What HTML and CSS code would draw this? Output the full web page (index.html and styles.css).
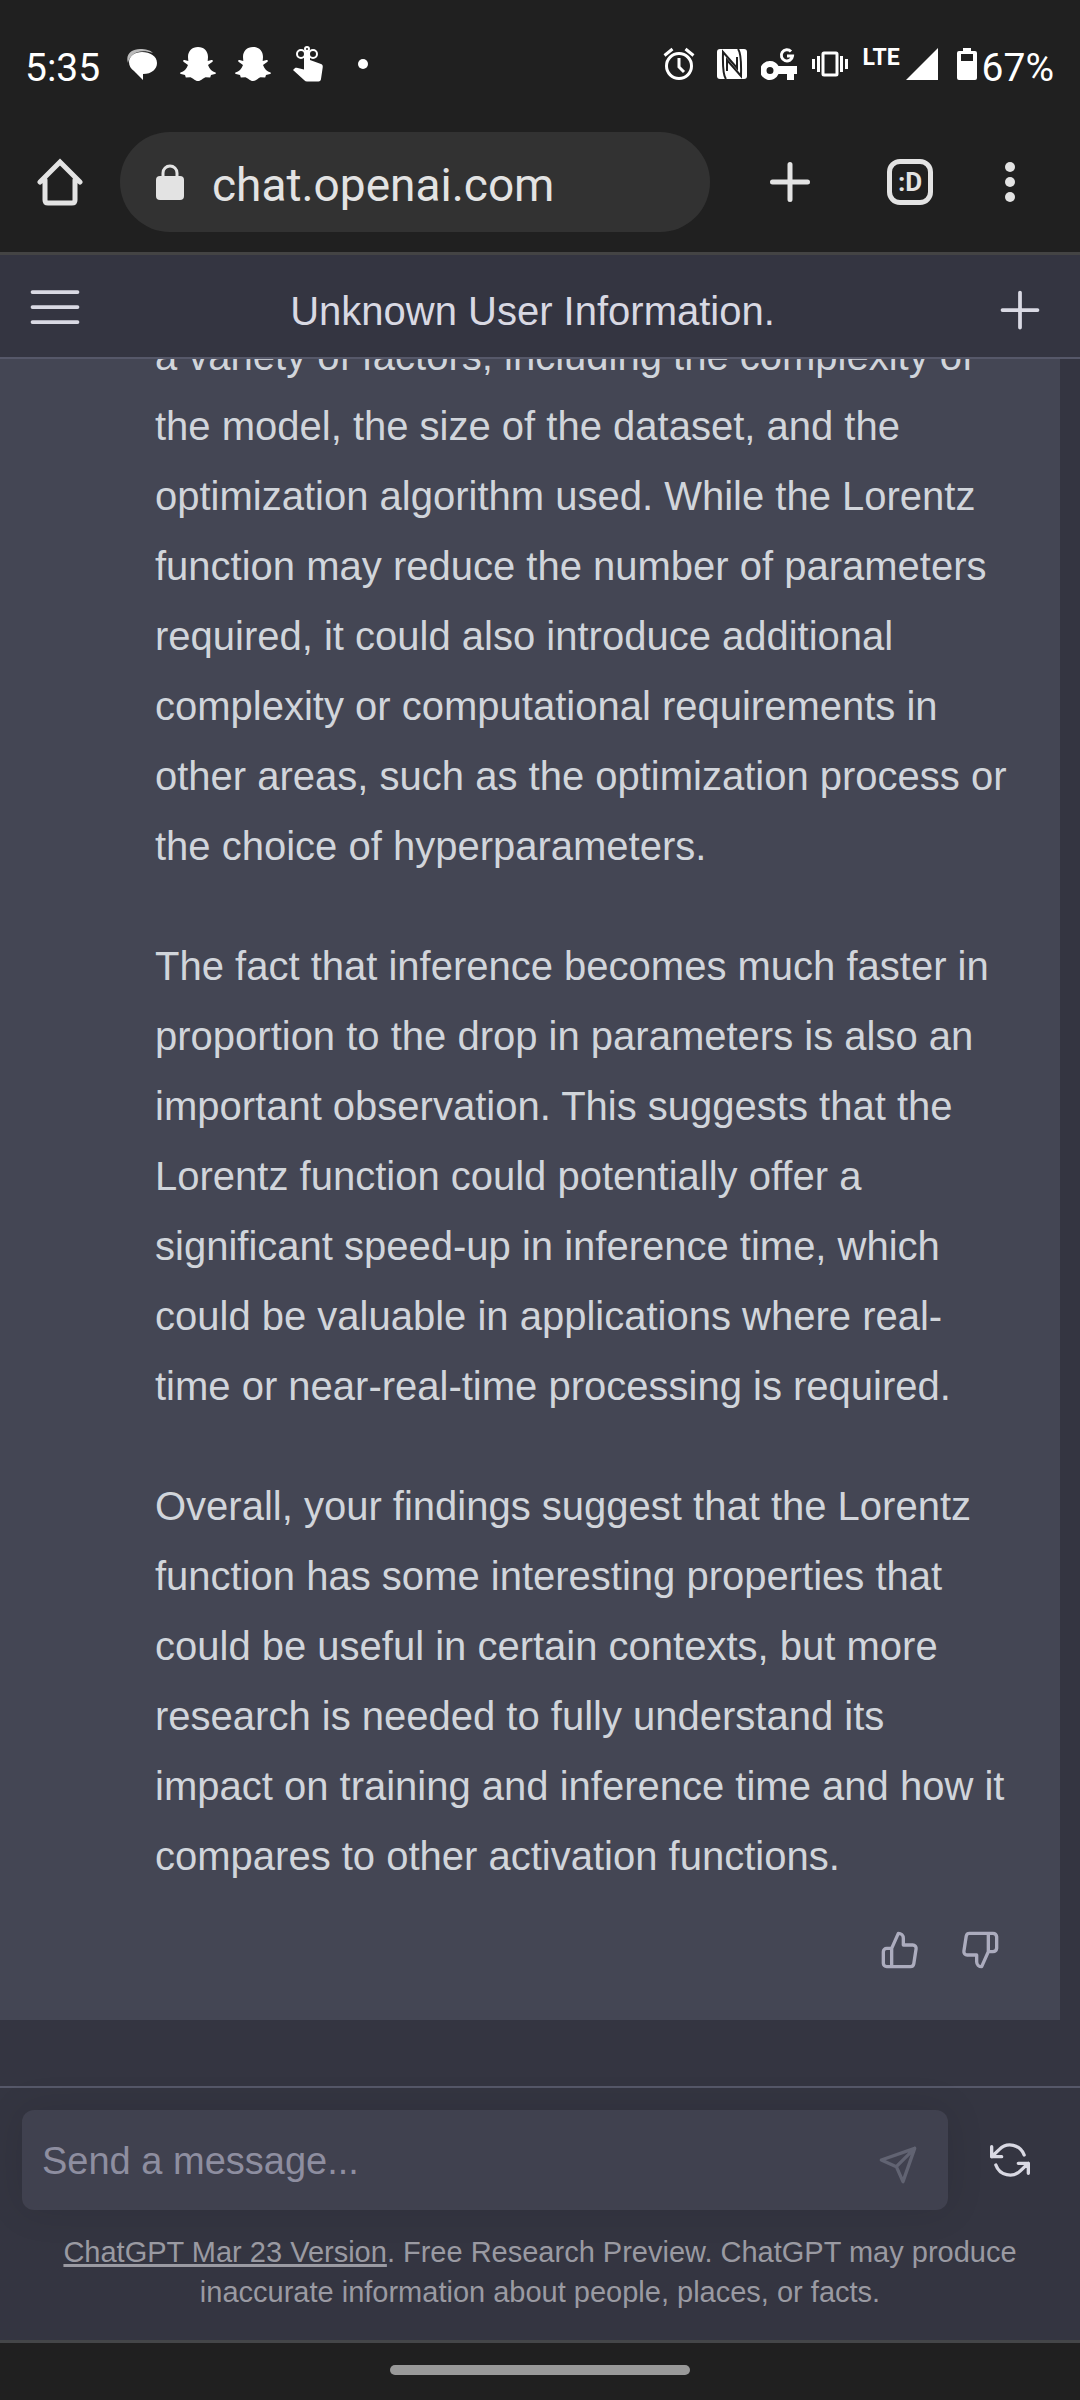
FILE: index.html
```html
<!DOCTYPE html>
<html lang="en">
<head>
<meta charset="utf-8">
<meta name="viewport" content="width=device-width, initial-scale=1">
<title>Unknown User Information.</title>
<link rel="stylesheet" href="styles.css">
</head>
<body>
<div class="status-bar">
  <div class="status-group status-left">
    <span class="status-text">5:35</span>
    <svg width="32" height="34" viewBox="0 0 32 34" aria-hidden="true"><path fill="#bbb" d="M2 16C-1 7 6 2 14 2c6 0 10 1 13 4-6-2-11-2-15-1C6 7 3 11 2 16z"/><path fill="#fff" d="M16 5c8 0 15 4 15 11 0 6-5 11-14 11v6L8 24c-3-2-5-5-5-9C3 9 9 5 16 5z"/></svg>
    <svg class="ghost" width="36" height="36" viewBox="0 0 36 36" aria-hidden="true"><path fill="#fff" d="M18 1c6 0 10 4 10 10l-.3 4 3.800-1c1.500 0 1.800 1.300.7 2L28 19c1.500 4 4 6.500 7.500 7.500.7.500.4 1.300-.5 1.600l-4 1-.8 2.400-4.700-.3C23 32 21 35 18 35s-5-3-7.500-3.800l-4.700.3L5 29.100l-4-1c-.9-.3-1.200-1.100-.5-1.600C4 25.500 6.500 23 8 19l-4.200-3c-1.100-.7-.8-2 .7-2l3.800 1L8 11C8 5 12 1 18 1z"/></svg>
    <svg class="ghost" width="36" height="36" viewBox="0 0 36 36" aria-hidden="true"><path fill="#fff" d="M18 1c6 0 10 4 10 10l-.3 4 3.800-1c1.500 0 1.800 1.300.7 2L28 19c1.500 4 4 6.500 7.500 7.500.7.500.4 1.300-.5 1.600l-4 1-.8 2.400-4.700-.3C23 32 21 35 18 35s-5-3-7.500-3.800l-4.700.3L5 29.100l-4-1c-.9-.3-1.200-1.100-.5-1.600C4 25.500 6.500 23 8 19l-4.200-3c-1.100-.7-.8-2 .7-2l3.800 1L8 11C8 5 12 1 18 1z"/></svg>
    <svg width="30" height="36" viewBox="0 0 30 36" aria-hidden="true"><g fill="none" stroke="#fff" stroke-width="2"><circle cx="8" cy="8" r="4"/><circle cx="20" cy="8" r="4"/><circle cx="14" cy="3" r="2"/></g><path fill="#fff" d="M11 6c0-2 6-2 6 0v8l11 4c1.500.6 2 1.800 1.700 3.500L28 33c-.2 1.500-1 2.500-2.500 2.500H14c-1 0-2-.4-2.700-1.200L0 24l1.800-1.800c.6-.5 1.200-.6 2-.4L11 23.500z"/></svg>
    <svg class="more-dot" width="10" height="10" viewBox="0 0 10 10" aria-hidden="true"><circle cx="5" cy="5" r="5" fill="#fff"/></svg>
  </div>
  <div class="status-group">
    <svg width="32" height="34" viewBox="0 0 32 34" aria-hidden="true"><g fill="none" stroke="#fff" stroke-width="3"><circle cx="16" cy="19" r="12.500"/><path d="M1.500 8.500l8-6.500M30.500 8.500l-8-6.500M16 11v9l5 5"/></g></svg>
    <svg class="nfc" width="30" height="30" viewBox="0 0 30 30" aria-hidden="true"><rect width="30" height="30" rx="3" fill="#fff"/><g fill="none" stroke="#202020" stroke-width="2"><path d="M9 30C5 25 6 8 6 3l14 16V8"/><path d="M21 0c4 5 3 22 3 27L10 11v11"/></g></svg>
    <svg class="key" width="36" height="34" viewBox="0 0 36 34" aria-hidden="true"><path fill="#fff" fill-rule="evenodd" d="M9 14c4 0 7 2 8.500 5H36v8h-3v6h-7v-6h-8.500A9.500 9.500 0 1 1 9 14zm0 6a3.500 3.500 0 1 0 0 7 3.500 3.500 0 0 0 0-7z"/><path fill="none" stroke="#fff" stroke-width="3" d="M30 4.500A5.600 5.600 0 1 0 31.500 9H26"/></svg>
    <svg class="vibrate" width="36" height="26" viewBox="0 0 36 26" aria-hidden="true"><rect x="11" y="2" width="14" height="22" rx="1" fill="none" stroke="#fff" stroke-width="3"/><path stroke="#fff" stroke-width="3" d="M1.500 8v10M6.500 5v16M29.500 5v16M34.500 8v10"/></svg>
    <span class="network">LTE</span>
    <svg width="32" height="32" viewBox="0 0 32 32" aria-hidden="true"><path fill="#fff" d="M32 0v32H0z"/></svg>
    <svg class="battery" width="20" height="32" viewBox="0 0 20 32" aria-hidden="true"><path fill="#fff" fill-rule="evenodd" d="M6 0h8v3h4a2 2 0 0 1 2 2v25a2 2 0 0 1-2 2H2a2 2 0 0 1-2-2V5a2 2 0 0 1 2-2h4zM4 6v7h12V6z"/></svg>
    <span class="status-text">67%</span>
  </div>
</div>

<div class="browser-bar">
  <button class="bar-button home" aria-label="Home"><svg width="46" height="48" viewBox="0 0 46 48"><path d="M3 24L23 4l20 20M8 22v20q0 3 3 3h24q3 0 3-3V22" fill="none" stroke="#e3e3e3" stroke-width="5" stroke-linecap="round"/></svg></button>
  <label class="address">
    <svg width="28" height="36" viewBox="0 0 28 36" aria-hidden="true"><rect y="12" width="28" height="24" rx="4" fill="#e3e3e3"/><path d="M7 14V9a7 7 0 0 1 14 0v5" fill="none" stroke="#e3e3e3" stroke-width="3"/></svg>
    <input type="text" value="chat.openai.com" aria-label="Address">
  </label>
  <button class="bar-button new-tab" aria-label="New tab"><svg width="40" height="40" viewBox="0 0 40 40"><path d="M20 2.500v35M2.500 20h35" stroke="#e3e3e3" stroke-width="5" stroke-linecap="round"/></svg></button>
  <button class="bar-button tabs" aria-label="Tabs">:D</button>
  <button class="bar-button" aria-label="More"><svg width="10" height="40" viewBox="0 0 10 40"><g fill="#e3e3e3"><circle cx="5" cy="5" r="5"/><circle cx="5" cy="20" r="5"/><circle cx="5" cy="35" r="5"/></g></svg></button>
</div>

<header class="chat-header">
  <button aria-label="Open sidebar"><svg class="outline" width="60" height="60" viewBox="0 0 24 24"><path d="M3 6h18M3 12h18M3 18h18"/></svg></button>
  <h1>Unknown User Information.</h1>
  <button class="new-chat" aria-label="New chat"><svg class="outline" width="60" height="60" viewBox="0 0 24 24"><path d="M12 5v14M5 12h14"/></svg></button>
</header>

<main class="conversation">
  <article class="message">
    <p>a variety of factors, including the complexity of<br>the model, the size of the dataset, and the<br>optimization algorithm used. While the Lorentz<br>function may reduce the number of parameters<br>required, it could also introduce additional<br>complexity or computational requirements in<br>other areas, such as the optimization process or<br>the choice of hyperparameters.</p>
    <p>The fact that inference becomes much faster in<br>proportion to the drop in parameters is also an<br>important observation. This suggests that the<br>Lorentz function could potentially offer a<br>significant speed-up in inference time, which<br>could be valuable in applications where real-<br>time or near-real-time processing is required.</p>
    <p>Overall, your findings suggest that the Lorentz<br>function has some interesting properties that<br>could be useful in certain contexts, but more<br>research is needed to fully understand its<br>impact on training and inference time and how it<br>compares to other activation functions.</p>
    <div class="feedback">
      <button aria-label="Good response"><svg class="icon" width="40" height="40" viewBox="0 0 24 24"><path d="M14 9V5a3 3 0 0 0-3-3l-4 9v11h11.280a2 2 0 0 0 2-1.700l1.380-9a2 2 0 0 0-2-2.300zM7 22H4a2 2 0 0 1-2-2v-7a2 2 0 0 1 2-2h3"/></svg></button>
      <button aria-label="Bad response"><svg class="icon" width="40" height="40" viewBox="0 0 24 24"><path d="M10 15v4a3 3 0 0 0 3 3l4-9V2H5.720a2 2 0 0 0-2 1.700l-1.380 9a2 2 0 0 0 2 2.300zM17 2h2.670A2.310 2.310 0 0 1 22 4v7a2.310 2.310 0 0 1-2.330 2H17"/></svg></button>
    </div>
  </article>
</main>

<footer class="composer">
  <form class="composer-row">
    <div class="message-box">
      <input type="text" placeholder="Send a message..." aria-label="Message">
      <button class="send" type="button" aria-label="Send"><svg class="icon" width="40" height="40" viewBox="0 0 24 24"><path d="M22 2L11 13M22 2l-7 20-4-9-9-4z"/></svg></button>
    </div>
    <button class="regenerate" type="button" aria-label="Regenerate response"><svg class="icon" width="40" height="40" viewBox="0 0 24 24"><path d="M1 4v6h6M23 20v-6h-6M20.490 9A9 9 0 0 0 5.640 5.640L1 10m22 4l-4.640 4.360A9 9 0 0 1 3.510 15"/></svg></button>
  </form>
  <p class="notice"><a href="#">ChatGPT Mar 23 Version</a>. Free Research Preview. ChatGPT may produce<br>inaccurate information about people, places, or facts.</p>
</footer>

<div class="gesture-bar"><span class="gesture-handle"></span></div>
</body>
</html>
```
FILE: styles.css
```css
* {
  box-sizing: border-box;
}

body {
  margin: 0;
  height: 100vh;
  display: flex;
  flex-direction: column;
  background: #343541;
  color: #d1d5db;
  font-family: "Liberation Sans", Arial, sans-serif;
  font-size: 40px;
}

svg {
  display: block;
  flex: none;
}

button {
  display: flex;
  align-items: center;
  justify-content: center;
  flex: none;
  padding: 0;
  border: 0;
  background: none;
  color: inherit;
  font: inherit;
}

input {
  flex: 1;
  min-width: 0;
  padding: 0;
  border: 0;
  outline: 0;
  background: none;
  color: inherit;
  font: inherit;
}

.icon,
.outline {
  fill: none;
  stroke: currentColor;
  stroke-width: 2;
  stroke-linecap: round;
  stroke-linejoin: round;
}

.outline {
  stroke-width: 1.5;
}

/* Phone status bar */
.status-bar {
  display: flex;
  justify-content: space-between;
  align-items: center;
  flex: none;
  height: 128px;
  padding: 0 26px 0 25px;
  background: #202020;
  color: #fff;
  font-family: Roboto, sans-serif;
}

.status-group {
  display: flex;
  align-items: center;
}

.status-left {
  gap: 22px;
}

.status-text {
  padding-top: 8px;
  font-size: 39px;
  line-height: 44px;
}

.status-left .status-text {
  margin-right: 4px;
}

.ghost + .ghost {
  margin-left: -3px;
}

.more-dot {
  margin-left: 13px;
}

.nfc {
  margin-left: 22px;
}

.key {
  margin-left: 14px;
}

.vibrate {
  margin-left: 15px;
}

.network {
  align-self: flex-start;
  margin: 0 6px 0 15px;
  padding-top: 8px;
  font-size: 23px;
  font-weight: 700;
  line-height: 24px;
}

.battery {
  margin: 0 5px 0 19px;
}

/* Browser toolbar */
.browser-bar {
  display: flex;
  align-items: center;
  flex: none;
  height: 127px;
  padding: 0 65px 17px 37px;
  border-bottom: 3px solid #444;
  background: #202020;
  color: #e3e3e3;
  font-family: Roboto, sans-serif;
}

.address {
  display: flex;
  align-items: center;
  gap: 28px;
  flex: 1;
  min-width: 0;
  height: 100px;
  margin: 0 60px 0 37px;
  padding: 0 36px;
  border-radius: 50px;
  background: #323232;
  font-size: 46px;
}

.address input {
  padding-top: 6px;
}

.tabs {
  width: 46px;
  height: 46px;
  margin: 0 72px 0 77px;
  border: 5px solid #e3e3e3;
  border-radius: 13px;
  font-size: 26px;
  font-weight: 700;
}

/* Chat header */
.chat-header {
  display: flex;
  align-items: center;
  flex: none;
  height: 104px;
  padding: 2px 30px 0 25px;
  border-bottom: 2px solid #565869;
  color: #d9d9e3;
}

.chat-header h1 {
  flex: 1;
  margin: 0;
  padding: 8px 10px 0 0;
  font-size: 40px;
  font-weight: 400;
  line-height: 60px;
  text-align: center;
}

.new-chat {
  padding-top: 6px;
}

/* Conversation, scrolled to its end */
.conversation {
  display: flex;
  flex: 1;
  flex-direction: column;
  justify-content: flex-end;
  min-height: 0;
  padding: 0 20px 66px 0;
  overflow: hidden;
}

.message {
  padding: 0 50px 50px 155px;
  background: #444654;
  line-height: 70px;
}

.message p {
  margin: 0 0 50px;
  white-space: nowrap;
}

.message .feedback {
  display: flex;
  justify-content: flex-end;
  gap: 40px;
  margin-top: -11px;
  padding-right: 10px;
  color: #acacbe;
}

/* Composer */
.composer {
  flex: none;
  padding: 22px 22px 28px;
  border-top: 2px solid #565869;
}

.composer-row {
  display: flex;
  align-items: center;
  gap: 42px;
  padding-right: 28px;
}

.message-box {
  display: flex;
  align-items: center;
  flex: 1;
  height: 100px;
  padding: 0 30px 0 20px;
  border-radius: 12px;
  background: #40414f;
  box-shadow: 0 0 38px rgba(0, 0, 0, 0.1);
  font-size: 38px;
}

.message-box input {
  padding-top: 2px;
}

.message-box input::placeholder {
  color: #8e8ea0;
  opacity: 1;
}

.send {
  padding-top: 10px;
  color: #616372;
}

.regenerate {
  color: #d9d9e3;
}

.notice {
  margin: 0;
  padding-top: 22px;
  color: #9a9aa2;
  font-size: 29px;
  line-height: 40px;
  text-align: center;
}

.notice a {
  color: inherit;
  text-decoration-thickness: 3px;
}

/* Gesture navigation */
.gesture-bar {
  display: flex;
  justify-content: center;
  flex: none;
  height: 60px;
  padding-top: 22px;
  border-top: 3px solid #444648;
  background: #202020;
}

.gesture-handle {
  width: 300px;
  height: 10px;
  border-radius: 5px;
  background: #999;
}
```
